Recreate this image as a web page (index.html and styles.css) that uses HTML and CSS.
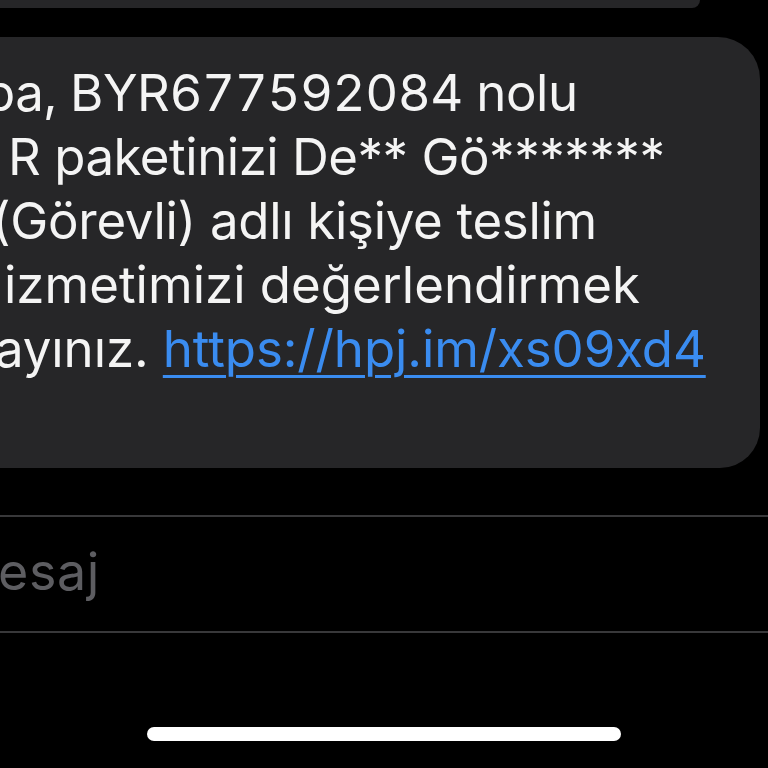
FILE: index.html
```html
<!DOCTYPE html>
<html lang="tr">
<head>
<meta charset="utf-8">
<title>Mesajlar</title>
<link rel="stylesheet" href="styles.css">
</head>
<body>
<div class="screen">
  <div class="bubble bubble-prev"></div>
  <div class="bubble bubble-main">
    <div class="line l1">ba, BYR677592084 nolu</div>
    <div class="line l2">R paketinizi De** Gö*******</div>
    <div class="line l3">(Görevli) adlı kişiye teslim</div>
    <div class="line l4">izmetimizi değerlendirmek</div>
    <div class="line l5">ayınız. <a class="link" href="#">https://hpj.im/xs09xd4</a></div>
  </div>
  <div class="composer">
    <div class="placeholder">esaj</div>
  </div>
  <div class="home-indicator"></div>
</div>
</body>
</html>
```
FILE: styles.css
```css
html, body {
  margin: 0;
  padding: 0;
  background: #000;
}
.screen {
  width: 768px;
  height: 768px;
  overflow: hidden;
  background: #000;
  display: flex;
  flex-direction: column;
  font-family: Inter, "Liberation Sans", sans-serif;
}
.bubble {
  background: #262628;
}
.bubble-prev {
  width: 700px;
  height: 8px;
  border-radius: 0 0 45px 0;
}
.bubble-main {
  margin-top: 29px;
  width: 760px;
  height: 431px;
  box-sizing: border-box;
  padding-top: 24px;
  border-radius: 0 42px 40px 0;
  color: #f4f4f4;
  font-size: 51px;
  line-height: 64px;
  letter-spacing: 0;
  overflow: hidden;
}
.line {
  white-space: nowrap;
}
.l1 { text-indent: -16px; font-variant-numeric: tabular-nums; letter-spacing: -0.45px; }
.l2 { text-indent: 8px; letter-spacing: -0.5px; }
.l3 { text-indent: -8px; letter-spacing: -0.3px; }
.l4 { text-indent: 4px; }
.l5 { text-indent: -5px; letter-spacing: -0.1px; }
.link {
  color: #3a8cf0;
  text-decoration: underline;
  text-decoration-thickness: 3px;
  text-underline-offset: 8px;
}
.composer {
  margin-top: 47px;
  height: 114px;
  border-top: 2px solid #38383a;
  border-bottom: 2px solid #38383a;
}
.placeholder {
  padding-top: 23px;
  font-size: 52px;
  line-height: 64px;
  color: #5d5d61;
  text-indent: -2px;
  letter-spacing: 0.6px;
}
.home-indicator {
  margin: 94px auto 0;
  width: 474px;
  height: 14px;
  border-radius: 7px;
  background: #fff;
}
```
